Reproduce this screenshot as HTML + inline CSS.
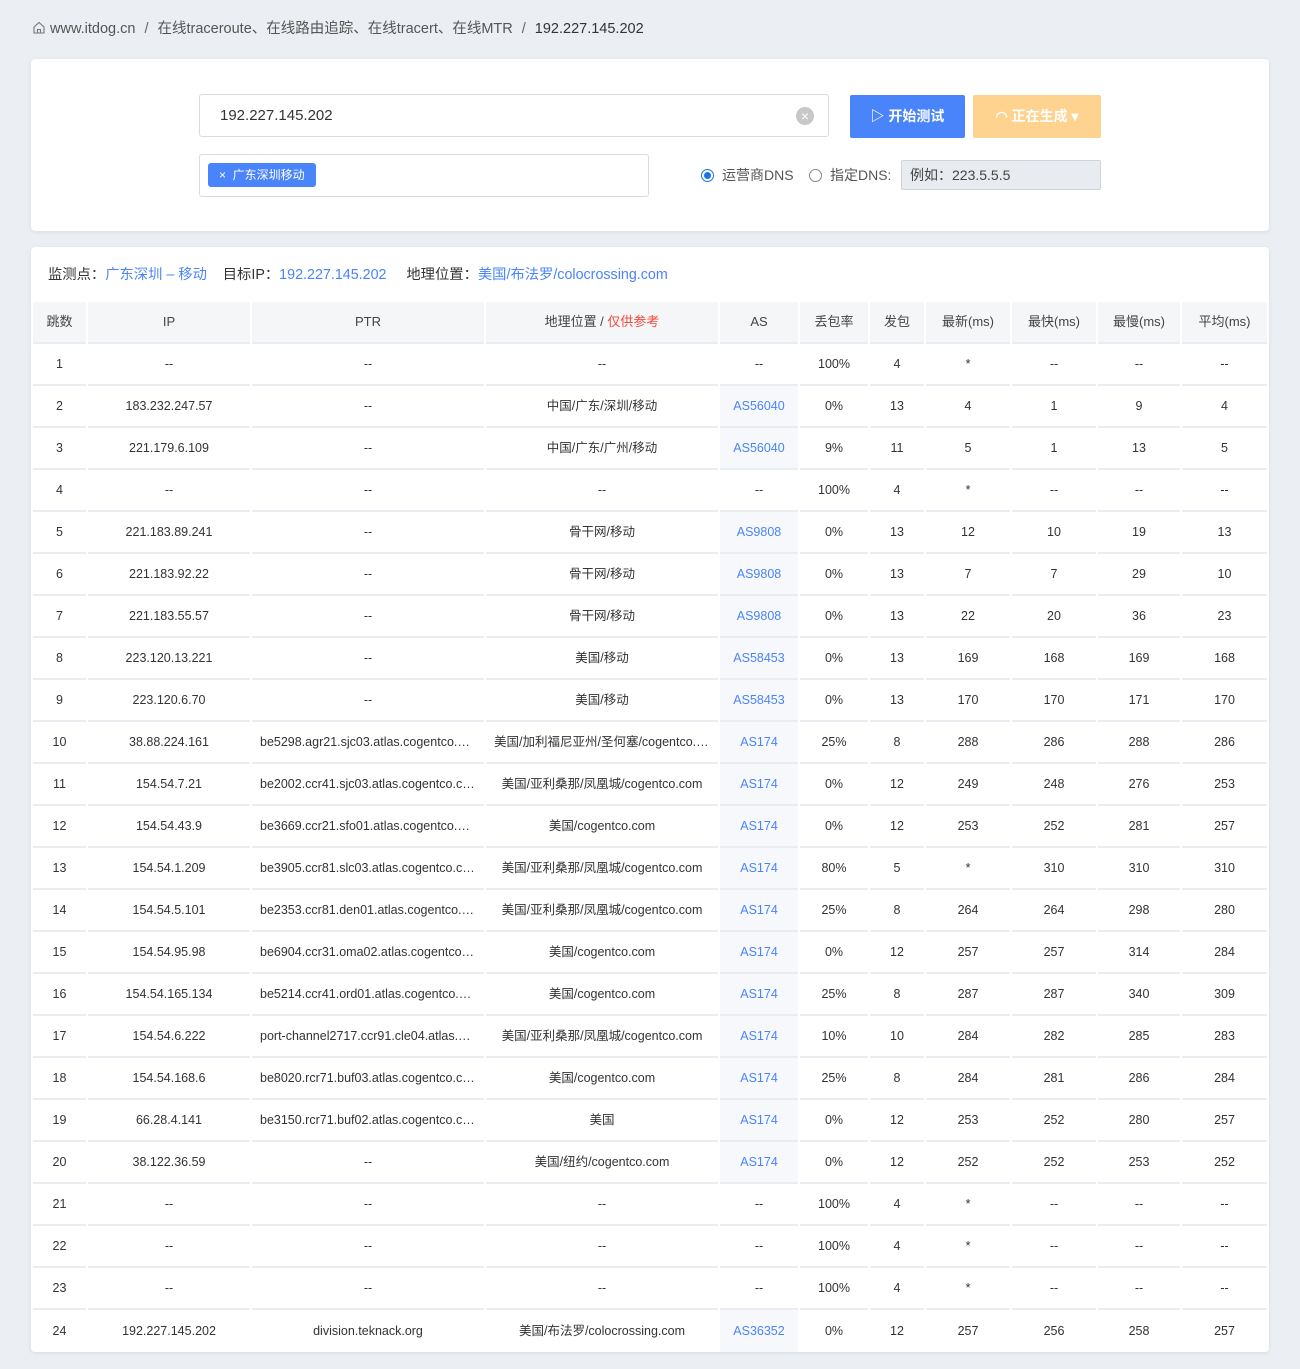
<!DOCTYPE html>
<html><head><meta charset="utf-8"><style>
*{box-sizing:border-box;margin:0;padding:0}
body{width:1300px;height:1369px;background:#ebeef3;font-family:"Liberation Sans","Noto Sans CJK SC",sans-serif;color:#333;position:relative;overflow:hidden}
.bc{position:absolute;left:33px;top:20px;font-size:14.5px;color:#555;line-height:18px;white-space:nowrap}
.bc .s{margin:0 9px;color:#666}
.bc .cur{color:#333}
.card{position:absolute;left:31px;width:1238px;background:#fff;border-radius:4px;box-shadow:0 1px 4px rgba(0,0,0,.08)}
.c1{top:59px;height:172px}
.c2{top:247px;height:1105px}
.inp{position:absolute;left:168px;top:35px;width:630px;height:43px;border:1px solid #d8dce2;border-radius:3px;font-size:15px;line-height:41px;padding-left:20px;color:#333}
.clr{position:absolute;right:14px;top:12px;width:18px;height:18px;border-radius:50%;background:#c8c8c8;color:#fff;font-size:14px;line-height:18px;text-align:center}
.tags{position:absolute;left:168px;top:95px;width:450px;height:43px;border:1px solid #d8dce2;border-radius:3px}
.tag{position:absolute;left:8px;top:8px;height:24px;background:#4a84fa;color:#fff;font-size:12px;line-height:24px;padding:0 11px;border-radius:3px}
.btn{position:absolute;top:36px;height:43px;color:#fff;font-size:14px;font-weight:bold;line-height:43px;text-align:center;border-radius:2px}
.b1{left:819px;width:115px;background:#4a84fa}
.b2{left:942px;width:128px;background:#fed28f}
.rad{position:absolute;top:105px;font-size:14px;color:#555;line-height:22px}
.rc{display:inline-block;width:13px;height:13px;border:1px solid #888;border-radius:50%;vertical-align:-2px;margin-right:8px;position:relative}
.rc.on{border-color:#1a73e8}
.rc.on:after{content:"";position:absolute;left:2px;top:2px;width:7px;height:7px;border-radius:50%;background:#1a73e8}
.dns{position:absolute;left:870px;top:101px;width:200px;height:30px;background:#e8ebef;border:1px solid #d0d4da;border-radius:2px;font-size:14px;line-height:28px;padding-left:8px;color:#444}
.info{position:absolute;left:17px;top:16px;font-size:14.3px;color:#333;white-space:nowrap}
.info b{font-weight:normal;color:#4a84fa}
table{position:absolute;left:0;top:55px;width:1238px;table-layout:fixed;border-collapse:separate;border-spacing:2px 0;font-size:12.5px;color:#333}
th{height:42px;background:#f5f6f7;font-weight:normal;font-size:13px;color:#444;border-bottom:2px solid #e9ecf0;line-height:18px}
td{height:42px;text-align:center;border-bottom:2px solid #e9ecf0;white-space:nowrap;overflow:hidden;text-overflow:ellipsis;padding:0 8px;line-height:16px}
tr:last-child td{border-bottom:none}
td.as{background:#f6f8fb;color:#4a84fa}
td.as.n{background:none;color:#333}
.red{color:#f5483b}
</style></head><body>
<div class="bc"><svg width="12" height="13" viewBox="0 0 12 13" style="vertical-align:-1px;margin-right:5px"><path d="M1 6L6 1.5L11 6V12H1Z M4.5 12V8.5H7.5V12" fill="none" stroke="#777" stroke-width="1.1"/></svg>www.itdog.cn<span class="s">/</span>在线traceroute、在线路由追踪、在线tracert、在线MTR<span class="s">/</span><span class="cur">192.227.145.202</span></div>
<div class="card c1">
<div class="inp">192.227.145.202<div class="clr">×</div></div>
<div class="tags"><div class="tag">×&nbsp;&nbsp;广东深圳移动</div></div>
<div class="btn b1">▷ 开始测试</div>
<div class="btn b2">◠ 正在生成 ▾</div>
<div class="rad" style="left:670px"><span class="rc on"></span>运营商DNS</div>
<div class="rad" style="left:778px"><span class="rc"></span>指定DNS:</div>
<div class="dns">例如：223.5.5.5</div>
</div>
<div class="card c2">
<div class="info">监测点：<b>广东深圳 – 移动</b>&nbsp;&nbsp;&nbsp;&nbsp;目标IP：<b>192.227.145.202</b>&nbsp;&nbsp;&nbsp;&nbsp;&nbsp;地理位置：<b>美国/布法罗/colocrossing.com</b></div>
<table>
<colgroup><col style="width:53px"><col style="width:162px"><col style="width:232px"><col style="width:232px"><col style="width:78px"><col style="width:68px"><col style="width:54px"><col style="width:84px"><col style="width:84px"><col style="width:82px"><col style="width:85px"></colgroup>
<tr><th>跳数</th><th>IP</th><th>PTR</th><th>地理位置 / <span class="red">仅供参考</span></th><th>AS</th><th>丢包率</th><th>发包</th><th>最新(ms)</th><th>最快(ms)</th><th>最慢(ms)</th><th>平均(ms)</th></tr>
<tr><td>1</td><td>--</td><td>--</td><td>--</td><td class="as n">--</td><td>100%</td><td>4</td><td>*</td><td>--</td><td>--</td><td>--</td></tr>
<tr><td>2</td><td>183.232.247.57</td><td>--</td><td>中国/广东/深圳/移动</td><td class="as">AS56040</td><td>0%</td><td>13</td><td>4</td><td>1</td><td>9</td><td>4</td></tr>
<tr><td>3</td><td>221.179.6.109</td><td>--</td><td>中国/广东/广州/移动</td><td class="as">AS56040</td><td>9%</td><td>11</td><td>5</td><td>1</td><td>13</td><td>5</td></tr>
<tr><td>4</td><td>--</td><td>--</td><td>--</td><td class="as n">--</td><td>100%</td><td>4</td><td>*</td><td>--</td><td>--</td><td>--</td></tr>
<tr><td>5</td><td>221.183.89.241</td><td>--</td><td>骨干网/移动</td><td class="as">AS9808</td><td>0%</td><td>13</td><td>12</td><td>10</td><td>19</td><td>13</td></tr>
<tr><td>6</td><td>221.183.92.22</td><td>--</td><td>骨干网/移动</td><td class="as">AS9808</td><td>0%</td><td>13</td><td>7</td><td>7</td><td>29</td><td>10</td></tr>
<tr><td>7</td><td>221.183.55.57</td><td>--</td><td>骨干网/移动</td><td class="as">AS9808</td><td>0%</td><td>13</td><td>22</td><td>20</td><td>36</td><td>23</td></tr>
<tr><td>8</td><td>223.120.13.221</td><td>--</td><td>美国/移动</td><td class="as">AS58453</td><td>0%</td><td>13</td><td>169</td><td>168</td><td>169</td><td>168</td></tr>
<tr><td>9</td><td>223.120.6.70</td><td>--</td><td>美国/移动</td><td class="as">AS58453</td><td>0%</td><td>13</td><td>170</td><td>170</td><td>171</td><td>170</td></tr>
<tr><td>10</td><td>38.88.224.161</td><td>be5298.agr21.sjc03.atlas.cogentco.com</td><td>美国/加利福尼亚州/圣何塞/cogentco.com</td><td class="as">AS174</td><td>25%</td><td>8</td><td>288</td><td>286</td><td>288</td><td>286</td></tr>
<tr><td>11</td><td>154.54.7.21</td><td>be2002.ccr41.sjc03.atlas.cogentco.com</td><td>美国/亚利桑那/凤凰城/cogentco.com</td><td class="as">AS174</td><td>0%</td><td>12</td><td>249</td><td>248</td><td>276</td><td>253</td></tr>
<tr><td>12</td><td>154.54.43.9</td><td>be3669.ccr21.sfo01.atlas.cogentco.com</td><td>美国/cogentco.com</td><td class="as">AS174</td><td>0%</td><td>12</td><td>253</td><td>252</td><td>281</td><td>257</td></tr>
<tr><td>13</td><td>154.54.1.209</td><td>be3905.ccr81.slc03.atlas.cogentco.com</td><td>美国/亚利桑那/凤凰城/cogentco.com</td><td class="as">AS174</td><td>80%</td><td>5</td><td>*</td><td>310</td><td>310</td><td>310</td></tr>
<tr><td>14</td><td>154.54.5.101</td><td>be2353.ccr81.den01.atlas.cogentco.com</td><td>美国/亚利桑那/凤凰城/cogentco.com</td><td class="as">AS174</td><td>25%</td><td>8</td><td>264</td><td>264</td><td>298</td><td>280</td></tr>
<tr><td>15</td><td>154.54.95.98</td><td>be6904.ccr31.oma02.atlas.cogentco.com</td><td>美国/cogentco.com</td><td class="as">AS174</td><td>0%</td><td>12</td><td>257</td><td>257</td><td>314</td><td>284</td></tr>
<tr><td>16</td><td>154.54.165.134</td><td>be5214.ccr41.ord01.atlas.cogentco.com</td><td>美国/cogentco.com</td><td class="as">AS174</td><td>25%</td><td>8</td><td>287</td><td>287</td><td>340</td><td>309</td></tr>
<tr><td>17</td><td>154.54.6.222</td><td>port-channel2717.ccr91.cle04.atlas.cogentco.com</td><td>美国/亚利桑那/凤凰城/cogentco.com</td><td class="as">AS174</td><td>10%</td><td>10</td><td>284</td><td>282</td><td>285</td><td>283</td></tr>
<tr><td>18</td><td>154.54.168.6</td><td>be8020.rcr71.buf03.atlas.cogentco.com</td><td>美国/cogentco.com</td><td class="as">AS174</td><td>25%</td><td>8</td><td>284</td><td>281</td><td>286</td><td>284</td></tr>
<tr><td>19</td><td>66.28.4.141</td><td>be3150.rcr71.buf02.atlas.cogentco.com</td><td>美国</td><td class="as">AS174</td><td>0%</td><td>12</td><td>253</td><td>252</td><td>280</td><td>257</td></tr>
<tr><td>20</td><td>38.122.36.59</td><td>--</td><td>美国/纽约/cogentco.com</td><td class="as">AS174</td><td>0%</td><td>12</td><td>252</td><td>252</td><td>253</td><td>252</td></tr>
<tr><td>21</td><td>--</td><td>--</td><td>--</td><td class="as n">--</td><td>100%</td><td>4</td><td>*</td><td>--</td><td>--</td><td>--</td></tr>
<tr><td>22</td><td>--</td><td>--</td><td>--</td><td class="as n">--</td><td>100%</td><td>4</td><td>*</td><td>--</td><td>--</td><td>--</td></tr>
<tr><td>23</td><td>--</td><td>--</td><td>--</td><td class="as n">--</td><td>100%</td><td>4</td><td>*</td><td>--</td><td>--</td><td>--</td></tr>
<tr><td>24</td><td>192.227.145.202</td><td>division.teknack.org</td><td>美国/布法罗/colocrossing.com</td><td class="as">AS36352</td><td>0%</td><td>12</td><td>257</td><td>256</td><td>258</td><td>257</td></tr>
</table>
</div>
</body></html>
